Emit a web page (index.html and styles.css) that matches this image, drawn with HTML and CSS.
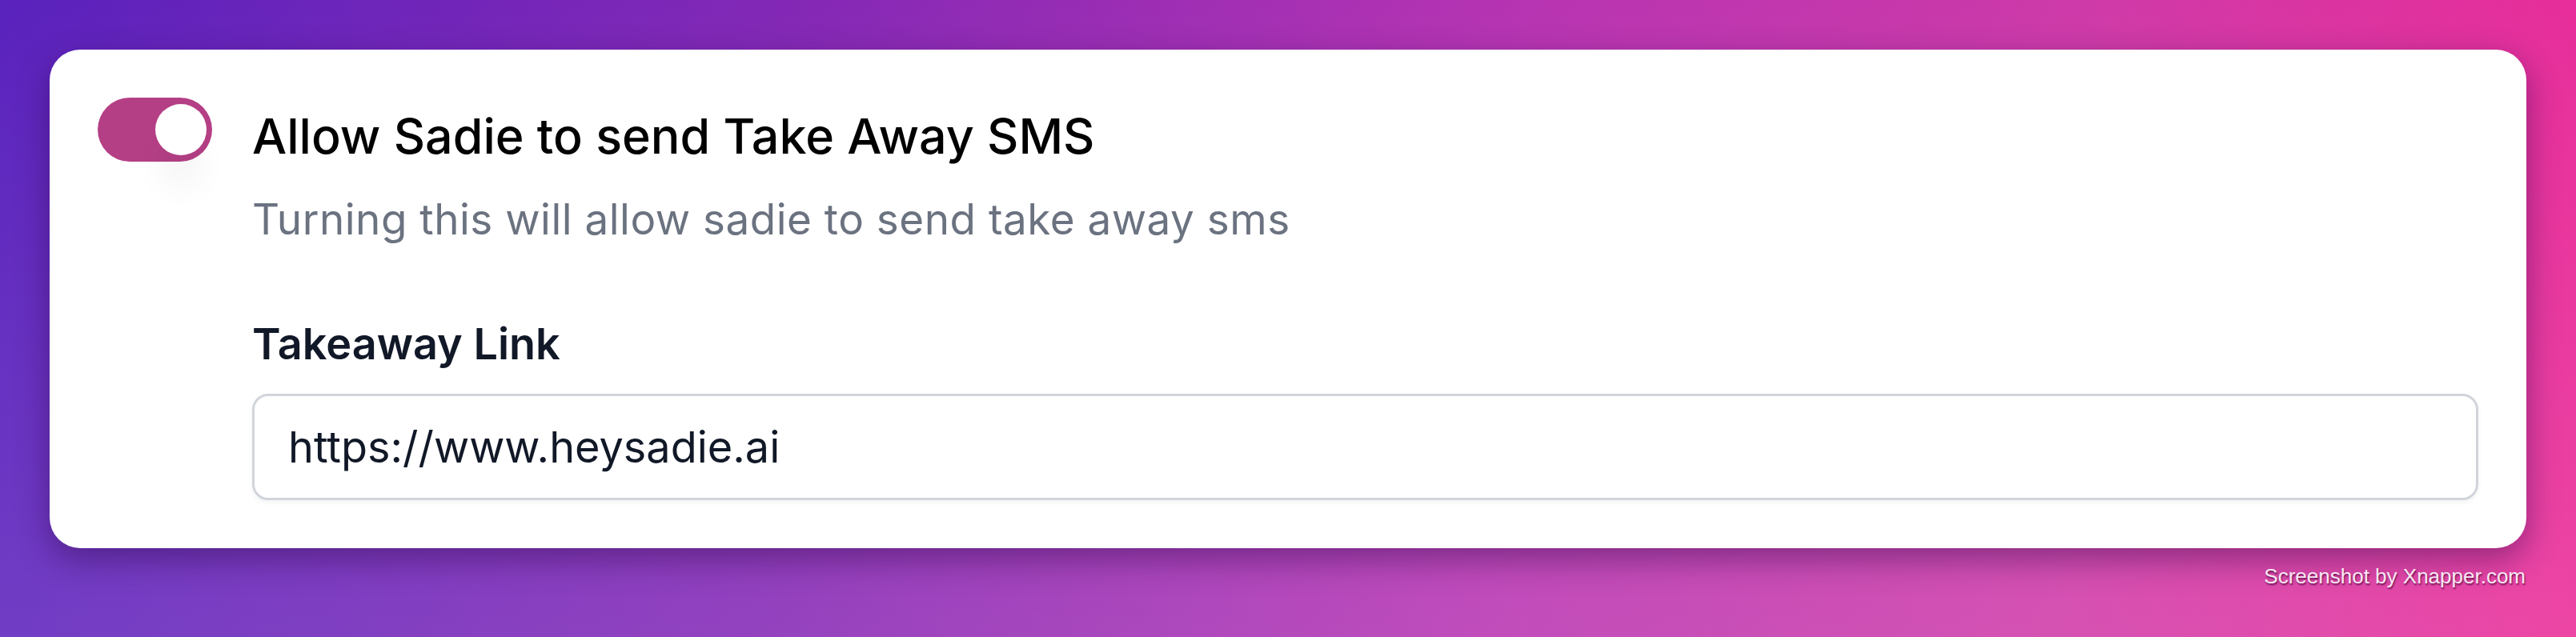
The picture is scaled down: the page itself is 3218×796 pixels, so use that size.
FILE: index.html
```html
<!DOCTYPE html>
<html lang="en">

<head>
	<meta charset="UTF-8">
	<meta name="viewport" content="width=device-width, initial-scale=1.0">
	<title>Take Away SMS</title>
	<link rel="stylesheet" href="styles.css">
</head>

<body>

	<div class="card">
		<label class="toggle">
			<input type="checkbox" checked>
			<span class="track"><span class="thumb"></span></span>
		</label>
		<div class="settings">
			<h2 class="title">Allow Sadie to send Take Away SMS</h2>
			<p class="hint">Turning this will allow sadie to send take away sms</p>
			<label class="field-label" for="takeawayLink">Takeaway Link</label>
			<input class="field" type="text" id="takeawayLink" value="https://www.heysadie.ai">
		</div>
	</div>

	<div class="watermark">Screenshot by Xnapper.com</div>

</body>

</html>
```

FILE: styles.css
```css
html,
body {
	margin: 0;
	height: 100%;
}

body {
	font-family: Inter, 'Noto Sans', sans-serif;
	padding: 62px;
	box-sizing: border-box;
	overflow: hidden;
	position: relative;
	background:
		linear-gradient(to bottom, rgba(255, 255, 255, 0) 0%, rgba(255, 255, 255, 0.12) 100%),
		linear-gradient(95deg, #5a22bd 0%, #8328b6 30%, #b734b2 58%, #cf3aa8 80%, #ea2c98 100%);
}

.card {
	display: flex;
	gap: 50px;
	background-color: #fff;
	border-radius: 38px;
	padding: 60px;
	box-shadow: 0 14px 40px rgba(45, 5, 70, 0.45);
}

/* toggle switch */
.toggle {
	flex: none;
	display: block;
	cursor: pointer;
}

.toggle input {
	display: none;
}

.track {
	display: flex;
	align-items: center;
	justify-content: flex-end;
	width: 143px;
	height: 80px;
	padding: 0 7px;
	box-sizing: border-box;
	border-radius: 40px;
	background-color: #b43f85;
}

.thumb {
	width: 64px;
	height: 64px;
	border-radius: 50%;
	background-color: #fff;
	box-shadow: 0 45px 40px -6px rgba(0, 0, 0, 0.05);
}

.settings {
	flex: 1;
	display: flex;
	flex-direction: column;
	padding-top: 10px;
}

.title {
	margin: 0;
	font-size: 61px;
	line-height: 76px;
	font-weight: 500;
	color: #000;
}

.hint {
	margin: 34px 0 0;
	font-size: 53px;
	line-height: 64px;
	letter-spacing: 0.5px;
	color: #6b7280;
}

.field-label {
	margin-top: 92px;
	font-size: 54px;
	line-height: 64px;
	font-weight: 600;
	color: #111827;
}

.field {
	margin-top: 30px;
	height: 133px;
	box-sizing: border-box;
	padding: 0 42px;
	border: 3px solid #d1d5db;
	border-radius: 20px;
	box-shadow: 0 3px 6px rgba(0, 0, 0, 0.05);
	font-family: inherit;
	font-size: 54px;
	color: #111827;
	outline: none;
}

.watermark {
	position: absolute;
	right: 63px;
	bottom: 60px;
	font-family: 'Liberation Sans', Arial, sans-serif;
	font-size: 26px;
	color: #f8e8f4;
	text-shadow: 1px 2px 2px rgba(70, 0, 50, 0.7);
}
```
